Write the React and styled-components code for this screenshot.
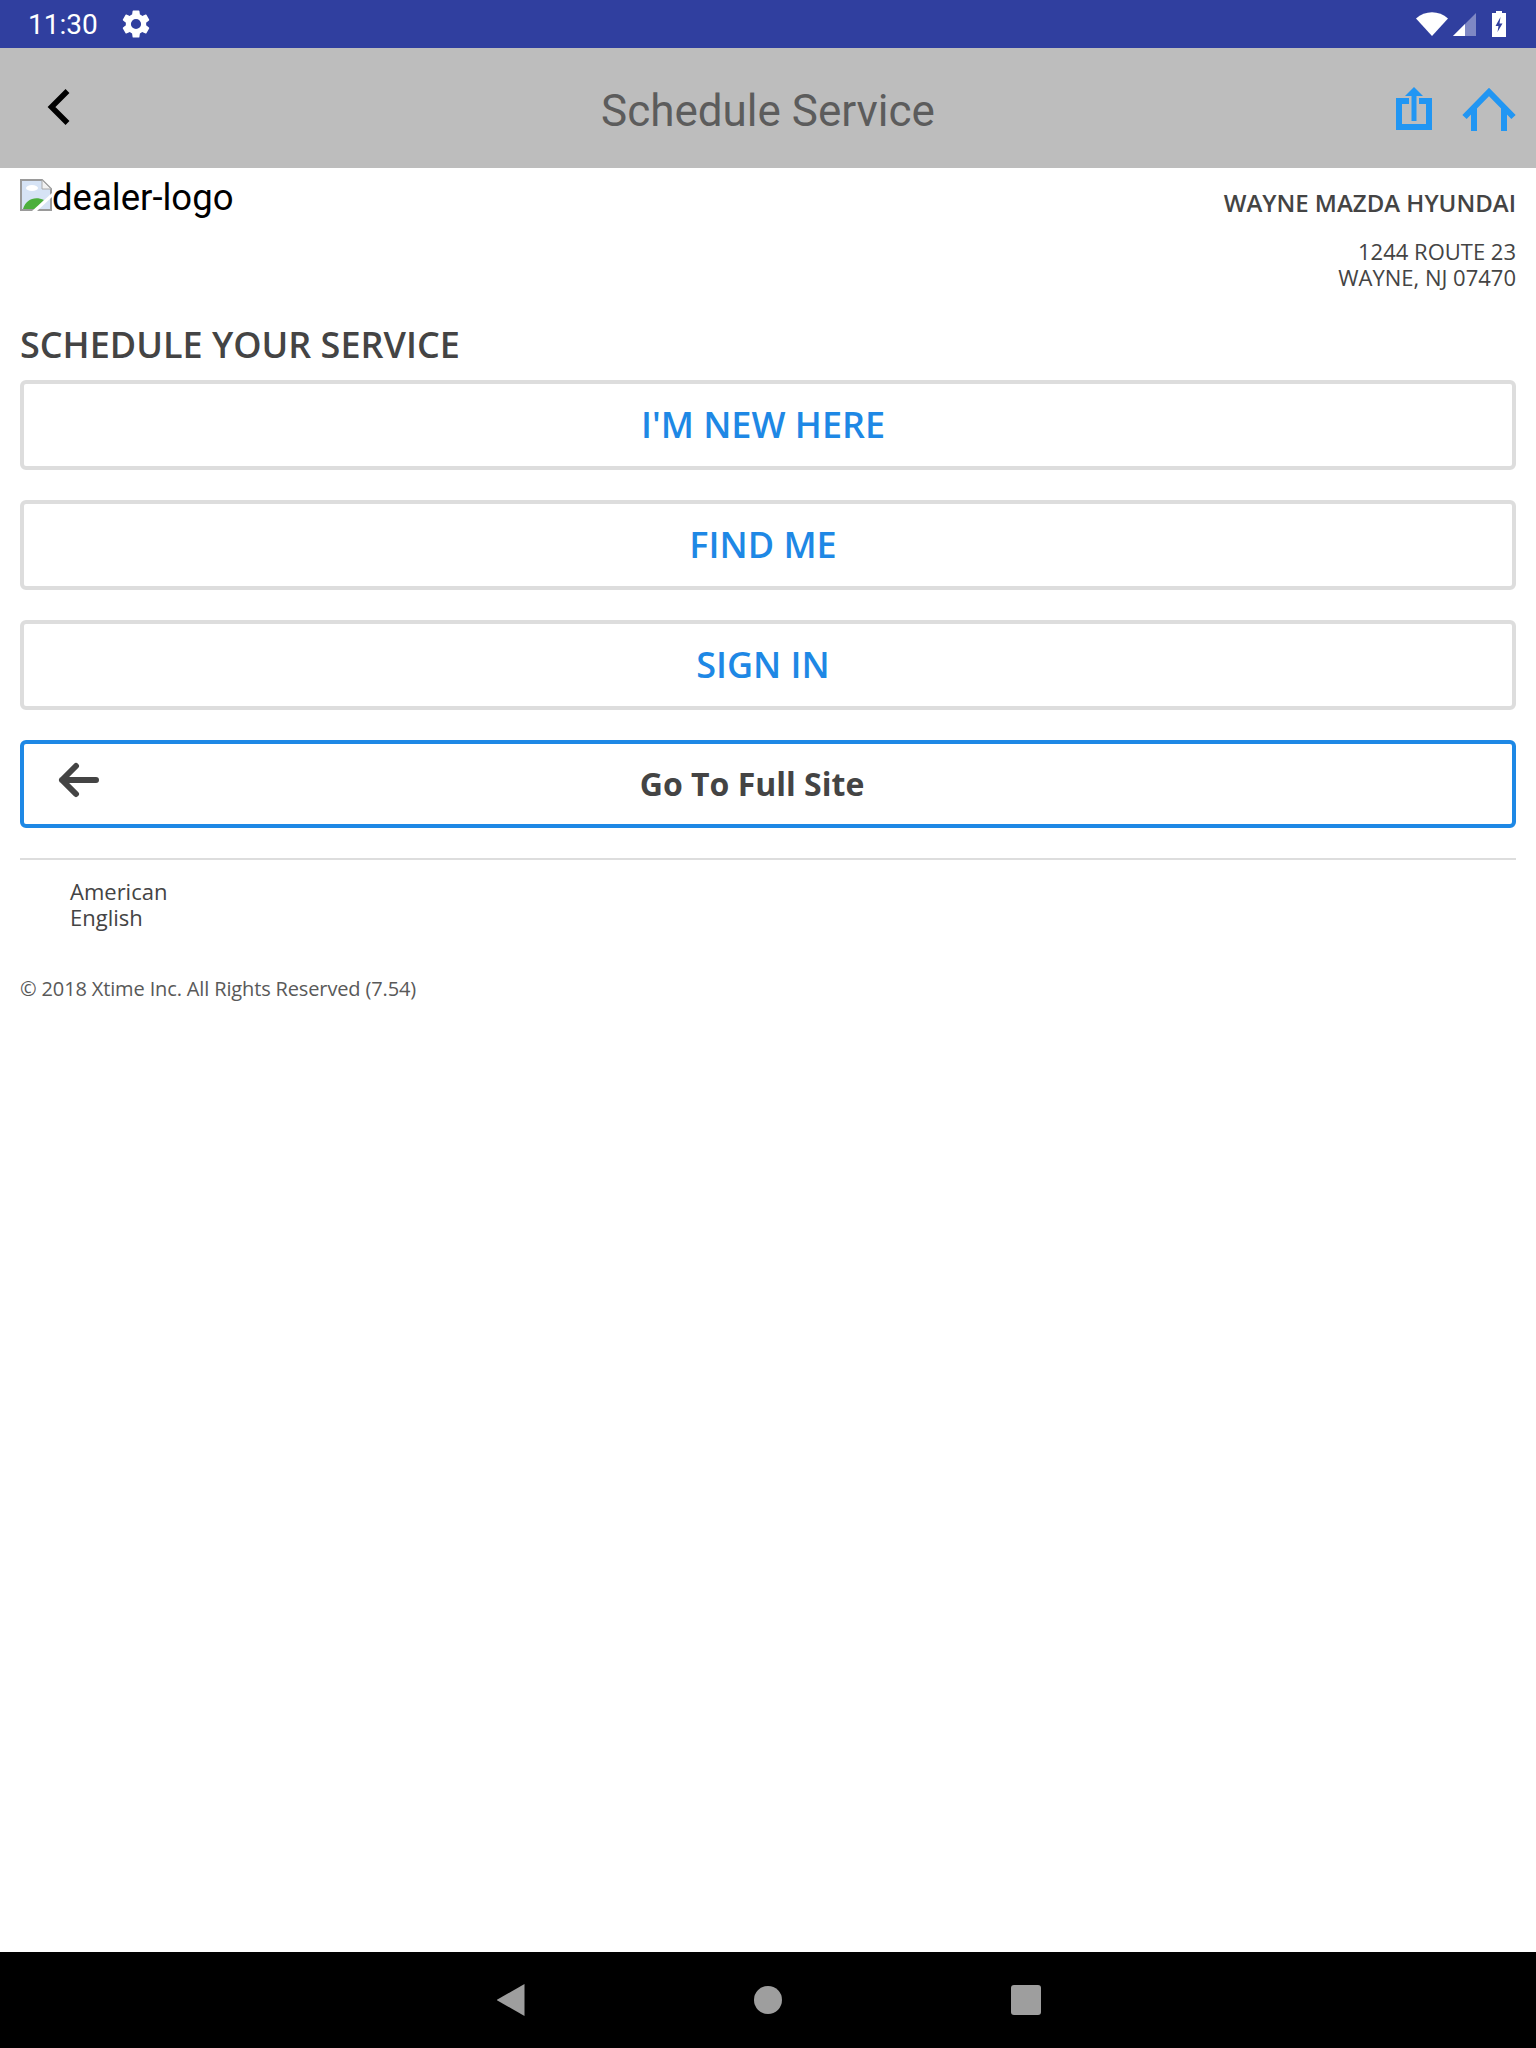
import styled, { createGlobalStyle } from "styled-components"

const GlobalStyle = createGlobalStyle`
  html, body {
    margin: 0;
    padding: 0;
    background: #fff;
  }
  * {
    box-sizing: border-box;
  }
`

const App = () => (
  <Page>
    <GlobalStyle />
    <StatusBar>
      <StatusLeft>
        <Clock>11:30</Clock>
        <GearIcon />
      </StatusLeft>
      <StatusRight>
        <WifiIcon />
        <SignalIcon />
        <BatteryIcon />
      </StatusRight>
    </StatusBar>
    <Toolbar>
      <BackButton>
        <svg width="24" height="38" viewBox="0 0 24 38">
          <path d="M21.5 3 L5.5 19 L21.5 35" fill="none" stroke="#000" strokeWidth="5.5" />
        </svg>
      </BackButton>
      <Title>Schedule Service</Title>
      <ToolbarActions>
        <ShareIcon />
        <HomeIcon />
      </ToolbarActions>
    </Toolbar>
    <Main>
      <DealerRow>
        <LogoAlt>
          <BrokenImage />
          dealer-logo
        </LogoAlt>
        <DealerInfo>
          <DealerName>WAYNE MAZDA HYUNDAI</DealerName>
          <DealerAddress>
            1244 ROUTE 23
            <br />
            WAYNE, NJ 07470
          </DealerAddress>
        </DealerInfo>
      </DealerRow>
      <Heading>SCHEDULE YOUR SERVICE</Heading>
      <ActionButton>I'M NEW HERE</ActionButton>
      <ActionButton>FIND ME</ActionButton>
      <ActionButton>SIGN IN</ActionButton>
      <FullSiteButton>
        <ArrowSlot>
          <svg width="42" height="36" viewBox="0 0 42 36">
            <path
              d="M38 18 H4 M18 4 L4 18 L18 32"
              fill="none"
              stroke="#444"
              strokeWidth="6"
              strokeLinecap="round"
              strokeLinejoin="round"
            />
          </svg>
        </ArrowSlot>
        Go To Full Site
      </FullSiteButton>
      <Divider />
      <Language>
        American
        <br />
        English
      </Language>
      <Copyright>© 2018 Xtime Inc. All Rights Reserved (7.54)</Copyright>
    </Main>
    <NavBar>
      <NavBack />
      <NavHome />
      <NavRecent />
    </NavBar>
  </Page>
)

export default App

const GearIcon = () => (
  <svg width="34" height="34" viewBox="0 0 24 24">
    <path
      fill="#fff"
      d="M19.14 12.94c.04-.3.06-.61.06-.94 0-.32-.02-.64-.07-.94l2.03-1.58a.49.49 0 0 0 .12-.61l-1.92-3.32a.49.49 0 0 0-.59-.22l-2.39.96c-.5-.38-1.03-.7-1.62-.94l-.36-2.54a.48.48 0 0 0-.48-.41h-3.84a.48.48 0 0 0-.47.41l-.36 2.54c-.59.24-1.13.57-1.62.94l-2.39-.96a.48.48 0 0 0-.59.22L2.74 8.87a.48.48 0 0 0 .12.61l2.03 1.58c-.05.3-.09.63-.09.94s.02.64.07.94l-2.03 1.58a.49.49 0 0 0-.12.61l1.92 3.32c.12.22.37.29.59.22l2.39-.96c.5.38 1.03.7 1.62.94l.36 2.54c.05.24.24.41.48.41h3.84c.24 0 .44-.17.47-.41l.36-2.54c.59-.24 1.13-.56 1.62-.94l2.39.96c.22.08.47 0 .59-.22l1.92-3.32a.47.47 0 0 0-.12-.61l-2.01-1.58zM12 15.6A3.6 3.6 0 1 1 12 8.4a3.6 3.6 0 0 1 0 7.2z"
    />
  </svg>
)

const WifiIcon = () => (
  <svg width="32" height="24" viewBox="0 0 32 24">
    <path fill="#fff" d="M0 6.5 C9 -2 23 -2 32 6.5 L16 24 Z" />
  </svg>
)

const SignalIcon = () => (
  <svg width="23" height="23" viewBox="0 0 23 23">
    <path fill="#7f88c4" d="M23 0 V23 H0 Z" />
    <path fill="#fff" d="M12 11 V23 H0 Z" />
  </svg>
)

const BatteryIcon = () => (
  <svg width="14" height="26" viewBox="0 0 14 26">
    <path fill="#fff" d="M4 0 H10 V2 H14 V26 H0 V2 H4 Z" />
    <path fill="#303f9f" d="M8.5 6 L3.5 15 H6.5 L5.5 21 L10.5 12.5 H7.5 Z" />
  </svg>
)

const ShareIcon = () => (
  <svg width="36" height="44" viewBox="0 0 36 44">
    <path d="M13 14 H3 V40 H33 V14 H23" fill="none" stroke="#2196f3" strokeWidth="6" />
    <path d="M18 34 V6" fill="none" stroke="#2196f3" strokeWidth="5" />
    <path d="M18 0 L27 9 H9 Z" fill="#2196f3" />
  </svg>
)

const HomeIcon = () => (
  <svg width="54" height="44" viewBox="0 0 54 44">
    <path d="M2.5 30 L27 5 L51.5 30" fill="none" stroke="#2196f3" strokeWidth="6" />
    <path d="M12 21 V44 M42 21 V44" fill="none" stroke="#2196f3" strokeWidth="6" />
  </svg>
)

const BrokenImage = () => (
  <svg width="32" height="32" viewBox="0 0 32 32">
    <path d="M1 1 H22 L31 10 V31 H1 Z" fill="#d6e3f5" stroke="#9a9a9a" strokeWidth="2" />
    <path d="M22 1 V10 H31 Z" fill="#f2f2f2" stroke="#aaa" strokeWidth="1" />
    <ellipse cx="12" cy="9" rx="6" ry="3" fill="#fff" />
    <path d="M3 30 C6 20 15 17 24 21 L16 30 Z" fill="#4caf3c" />
    <path d="M12 32 L32 14 V18 L17 32 Z" fill="#fff" />
  </svg>
)

const Page = styled.div`
  display: flex;
  flex-direction: column;
  width: 1536px;
  height: 2048px;
  overflow: hidden;
  background: #fff;
`
const StatusBar = styled.div`
  display: flex;
  flex: 0 0 48px;
  align-items: center;
  justify-content: space-between;
  padding: 0 30px 0 28px;
  background: #303f9f;
`
const StatusLeft = styled.div`
  display: flex;
  align-items: center;
  gap: 21px;
`
const Clock = styled.span`
  font-family: Roboto, sans-serif;
  font-size: 28px;
  color: #fff;
`
const StatusRight = styled.div`
  display: flex;
  align-items: center;
  gap: 5px;
  svg:last-child {
    margin-left: 11px;
  }
`
const Toolbar = styled.header`
  position: relative;
  display: flex;
  flex: 0 0 120px;
  align-items: center;
  justify-content: space-between;
  padding: 0 20px 0 46px;
  background: #bdbdbd;
`
const BackButton = styled.div`
  display: flex;
  margin-top: -2px;
`
const Title = styled.h1`
  position: absolute;
  left: 0;
  right: 0;
  margin: 0;
  padding-top: 5px;
  font-family: Roboto, sans-serif;
  font-size: 44px;
  font-weight: 400;
  color: #5c5c5c;
  text-align: center;
`
const ToolbarActions = styled.div`
  display: flex;
  align-items: center;
  gap: 30px;
  margin-top: 2px;
`
const Main = styled.main`
  display: flex;
  flex: 1;
  flex-direction: column;
  padding: 0 20px;
  font-family: "Open Sans", sans-serif;
  color: #444;
`
const DealerRow = styled.div`
  display: flex;
  justify-content: space-between;
  height: 152px;
`
const LogoAlt = styled.div`
  display: flex;
  align-items: center;
  height: 32px;
  margin-top: 13px;
  font-family: Roboto, sans-serif;
  font-size: 36.5px;
  color: #000;
  svg {
    margin-top: -5px;
  }
`
const DealerInfo = styled.div`
  text-align: right;
`
const DealerName = styled.div`
  margin-top: 18px;
  font-size: 24px;
  font-weight: 600;
  line-height: 33px;
`
const DealerAddress = styled.div`
  margin-top: 19px;
  font-size: 22px;
  line-height: 26px;
`
const Heading = styled.h2`
  margin: 0 0 10px;
  font-size: 36px;
  font-weight: 600;
  line-height: 50px;
`
const ActionButton = styled.button`
  height: 90px;
  margin-bottom: 30px;
  padding: 0 10px 2px 0;
  font-family: "Open Sans", sans-serif;
  font-size: 36px;
  font-weight: 600;
  color: #1e88e5;
  background: #fff;
  border: 4px solid #ddd;
  border-radius: 6px;
`
const FullSiteButton = styled.button`
  position: relative;
  height: 88px;
  padding: 0 32px 2px 0;
  font-family: "Open Sans", sans-serif;
  font-size: 32px;
  font-weight: 700;
  color: #444;
  background: #fff;
  border: 4px solid #1e88e5;
  border-radius: 6px;
`
const ArrowSlot = styled.span`
  position: absolute;
  top: 18px;
  left: 34px;
  display: flex;
`
const Divider = styled.hr`
  width: 100%;
  height: 2px;
  margin: 30px 0 0;
  background: #ddd;
  border: 0;
`
const Language = styled.div`
  margin-top: 18px;
  padding-left: 50px;
  font-size: 22px;
  line-height: 26px;
`
const Copyright = styled.div`
  margin-top: 45px;
  font-size: 20px;
  letter-spacing: -0.14px;
  line-height: 28px;
  color: #595959;
`
const NavBar = styled.nav`
  display: flex;
  flex: 0 0 96px;
  align-items: center;
  justify-content: center;
  gap: 229px;
  padding-left: 1px;
  background: #000;
`
const NavBack = styled.div`
  width: 28px;
  height: 32px;
  background: #9e9e9e;
  clip-path: polygon(100% 0, 100% 100%, 0 50%);
`
const NavHome = styled.div`
  width: 28px;
  height: 28px;
  background: #9e9e9e;
  border-radius: 50%;
`
const NavRecent = styled.div`
  width: 30px;
  height: 30px;
  background: #9e9e9e;
  border-radius: 3px;
`
